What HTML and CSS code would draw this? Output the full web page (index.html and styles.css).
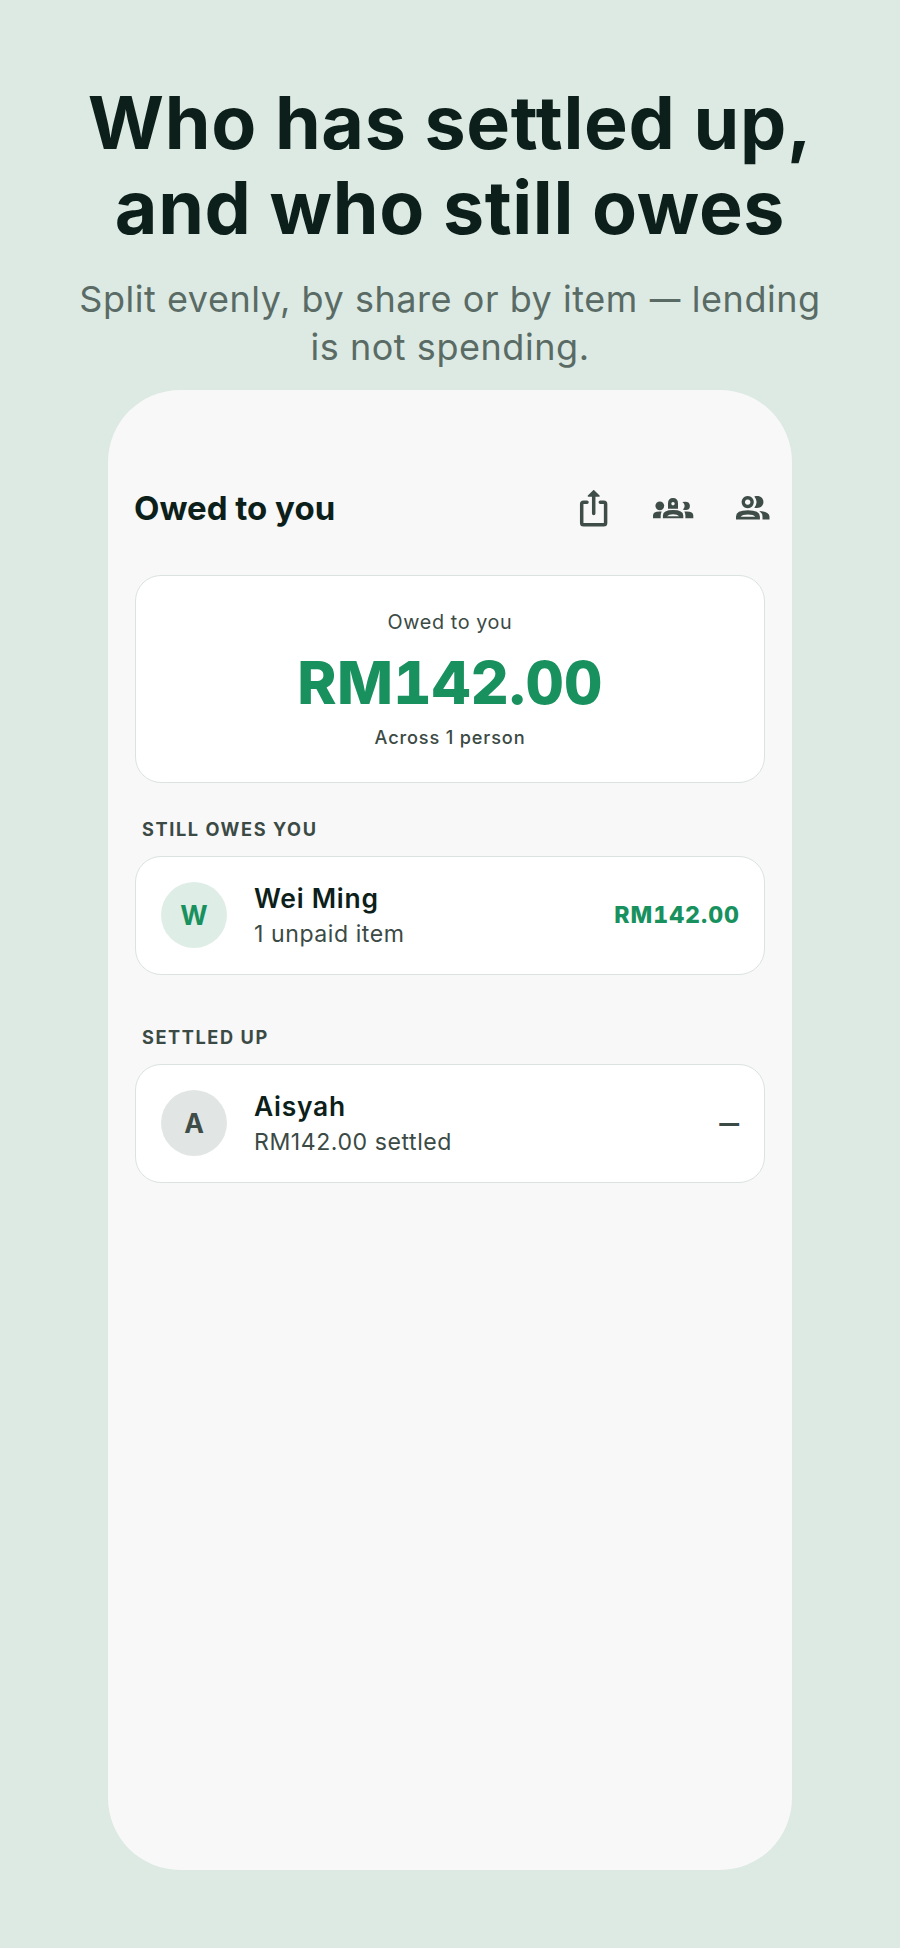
FILE: index.html
```html
<!DOCTYPE html>
<html lang="en">
<head>
<meta charset="utf-8">
<title>Owed to you</title>
<link rel="stylesheet" href="styles.css">
</head>
<body>
<main class="poster">
  <h1 class="headline">Who has settled up,<br>and who still owes</h1>
  <p class="tagline">Split evenly, by share or by item <span class="dash">—</span> lending<br>is not spending.</p>
  <section class="phone">
    <header class="appbar">
      <h2 class="appbar-title">Owed to you</h2>
      <nav class="actions">
        <svg class="icon" viewBox="0 0 40 40"><path class="line" d="M13 14.300H9.500Q7.700 14.300 7.700 16.100V35Q7.700 36.800 9.500 36.800H29.800Q31.600 36.800 31.600 35V16.100Q31.600 14.300 29.800 14.300H26.300M19.700 7V25.500"/><path class="tip" d="M19.700 2.700L25 8H14.400Z"/></svg>
        <svg class="icon" viewBox="0 0 40 40"><circle cx="6.800" cy="17.800" r="4.400"/><path d="M0 30.300V27.500Q0 23.600 6.500 23.600H8.700Q7.700 25.500 7.700 27.500V30.300Z"/><path fill-rule="evenodd" d="M15 20.800V15.500Q15 10 20 10T25 15.500V20.800ZM20 13.900a1.700 1.700 0 1 0 .01 0Z"/><path fill-rule="evenodd" d="M9.900 30.300V27.500Q9.900 22 20.100 22T30.300 27.500V30.300ZM14 28.200H26.200Q24.500 26.200 20.100 26.200T14 28.200Z"/><path d="M29.300 14Q36.900 12.500 36.900 18T29.800 21.500Q32 19.500 31.500 17Q31 15 29.300 14Z"/><path d="M40.300 30.300V27.500Q40.300 23.600 33.800 23.600H31.400Q32.400 25.500 32.400 27.500V30.300Z"/></svg>
        <svg class="icon" viewBox="0 0 40 40"><path fill-rule="evenodd" d="M15.700 8a6.100 6.100 0 1 0 .01 0ZM15.700 11.400a2.700 2.700 0 1 1-.01 0Z"/><path d="M22.300 8.500C28 7 31.400 10 31.400 14.100S28 21 22.300 19.700Q24.600 17 24.600 14.100T22.300 8.500Z"/><path fill-rule="evenodd" d="M4 31.500V28.600Q4 22.200 15.900 22.200T27.900 28.600V31.500ZM8.700 28.700H23.200Q21.500 26.600 15.900 26.600T8.700 28.700Z"/><path d="M27.300 23Q37.500 24 37.500 28.800V31.500H30.500V28.600Q30.500 25.300 27.300 23Z"/></svg>
      </nav>
    </header>
    <div class="card summary">
      <span class="summary-label">Owed to you</span>
      <strong class="summary-amount">RM142.00</strong>
      <span class="summary-note">Across 1 person</span>
    </div>
    <h3 class="section-title">STILL OWES YOU</h3>
    <div class="card person">
      <span class="avatar avatar-owes">W</span>
      <div class="info"><span class="name">Wei Ming</span><span class="detail">1 unpaid item</span></div>
      <span class="amount">RM142.00</span>
    </div>
    <h3 class="section-title section-settled">SETTLED UP</h3>
    <div class="card person">
      <span class="avatar">A</span>
      <div class="info"><span class="name">Aisyah</span><span class="detail">RM142.00 settled</span></div>
      <span class="amount amount-none">—</span>
    </div>
  </section>
</main>
</body>
</html>
```
FILE: styles.css
```css
* { box-sizing: border-box; }
body { margin: 0; background: #dceae3; font-family: Inter, "Liberation Sans", sans-serif; color: #0d1f1a; }
h1, h2, h3, p { margin: 0; }
.poster { height: 1948px; padding-top: 81px; display: flex; flex-direction: column; align-items: center; }
.headline { font-size: 73.500px; line-height: 84.700px; font-weight: 700; letter-spacing: 0.65px; text-align: center; white-space: nowrap; }
.tagline { margin-top: 25px; font-size: 36px; line-height: 48px; letter-spacing: 0.55px; text-align: center; color: #5a6b65; white-space: nowrap; }
.dash { display: inline-block; margin: 0 -2px; transform: scaleX(0.85); }
.phone { width: 684px; height: 1480px; margin-top: 19px; padding: 72px 27px 0; border-radius: 72px; background: #f8f8f8; flex: none; }
.appbar { display: flex; justify-content: space-between; align-items: center; height: 92px; }
.appbar-title { font-size: 33px; line-height: 42px; font-weight: 700; margin-left: -1px; }
.actions { display: flex; gap: 39px; margin-right: -7px; }
.icon { width: 40px; height: 40px; fill: #3f4d48; display: block; overflow: visible; }
.line { fill: none; stroke: #3f4d48; stroke-width: 3.500px; stroke-linecap: round; }
.tip { stroke: #3f4d48; stroke-width: 1.500px; stroke-linejoin: round; }
.card { background: #fff; border: 1.500px solid #dae3df; border-radius: 26px; }
.summary { margin-top: 21px; height: 207.500px; display: flex; flex-direction: column; align-items: center; padding-top: 33px; }
.summary-label { font-size: 19.800px; line-height: 27px; letter-spacing: 0.6px; color: #3b4a45; }
.summary-amount { margin-top: 10px; font-size: 59.400px; line-height: 72px; font-weight: 800; letter-spacing: 0.3px; font-variant-numeric: tabular-nums; color: #18915e; }
.summary-note { margin-top: 6px; font-size: 18.150px; line-height: 26px; font-weight: 500; letter-spacing: 0.85px; color: #3b4a45; }
.section-title { margin: 34.500px 0 14px 7px; font-size: 18.150px; line-height: 25px; font-weight: 700; letter-spacing: 1.600px; color: #3b4a45; }
.section-settled { margin-top: 50.500px; }
.person { height: 118.500px; display: flex; align-items: center; padding: 0 25px 1px; }
.avatar { width: 66px; height: 66px; border-radius: 50%; display: flex; align-items: center; justify-content: center; font-size: 26.400px; font-weight: 700; background: #e1e5e3; color: #3f4d48; }
.avatar-owes { background: #deede6; color: #18915e; }
.info { flex: 1; display: flex; flex-direction: column; margin-left: 27px; }
.name { font-size: 26.400px; line-height: 37px; font-weight: 600; letter-spacing: 0.75px; }
.detail { font-size: 23.100px; line-height: 34px; letter-spacing: 0.55px; color: #3b4a45; }
.amount { font-size: 23.100px; font-weight: 800; letter-spacing: 1px; margin-right: -1px; font-variant-numeric: tabular-nums; color: #18915e; }
.amount-none { color: #3b4a45; transform: scaleX(0.86); transform-origin: right; }
```
